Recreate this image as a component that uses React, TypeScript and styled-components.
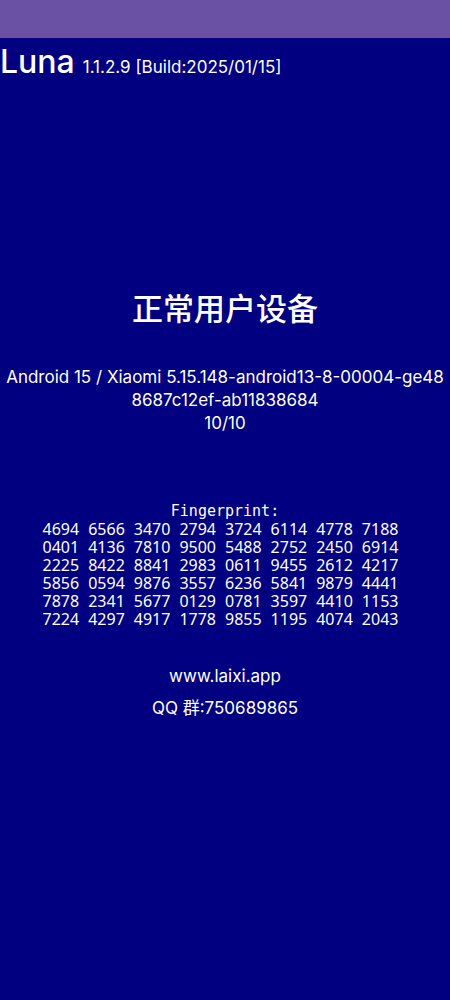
import React from "react";
import styled, { createGlobalStyle } from "styled-components";

const Global = createGlobalStyle`
  * { box-sizing: border-box; }
  body {
    margin: 0;
    background: #000080;
    color: #fff;
    font-family: Inter, "Noto Sans CJK SC", sans-serif;
    font-size: 17px;
  }
`;

const Screen = styled.div`
  min-height: 100vh;
  display: flex;
  flex-direction: column;
`;

const StatusBar = styled.div`
  height: 38px;
  background: #6a51a3;
`;

const Header = styled.header`
  display: flex;
  align-items: baseline;
  gap: 8px;
  line-height: 48px;
`;

const AppName = styled.h1`
  margin: 0;
  font-size: 32px;
  font-weight: 500;
`;

const Version = styled.span`
  font-size: 17px;
`;

const Main = styled.main`
  display: flex;
  flex-direction: column;
  align-items: center;
  padding-top: 194px;
  text-align: center;
`;

const Verdict = styled.h2`
  margin: 0;
  font-size: 31px;
  line-height: 48px;
  font-weight: 500;
`;

const System = styled.p`
  margin: 33px 0 0;
  line-height: 23px;
`;

const Fingerprint = styled.section`
  margin-top: 67px;
  line-height: 18px;
`;

const Label = styled.h3`
  margin: 0;
  font-family: "DejaVu Sans Mono", monospace;
  font-size: 15px;
  font-weight: 400;
`;

const Digits = styled.table`
  border-collapse: collapse;
  font-family: "Noto Sans", sans-serif;
  font-size: 16px;

  td {
    padding: 0 9px 0 0;
  }
`;

const Footer = styled.footer`
  margin-top: 32px;
  display: flex;
  flex-direction: column;
  align-items: center;
  line-height: 32px;
`;

const SiteLink = styled.a`
  color: inherit;
  text-decoration: none;
`;

const rows = [
  "4694 6566 3470 2794 3724 6114 4778 7188",
  "0401 4136 7810 9500 5488 2752 2450 6914",
  "2225 8422 8841 2983 0611 9455 2612 4217",
  "5856 0594 9876 3557 6236 5841 9879 4441",
  "7878 2341 5677 0129 0781 3597 4410 1153",
  "7224 4297 4917 1778 9855 1195 4074 2043",
].map((row) => row.split(" "));

export default function App() {
  return (
    <Screen>
      <Global />
      <StatusBar />
      <Header>
        <AppName>Luna</AppName>
        <Version>1.1.2.9 [Build:2025/01/15]</Version>
      </Header>
      <Main>
        <Verdict lang="zh-CN">正常用户设备</Verdict>
        <System>
          Android 15 / Xiaomi 5.15.148-android13-8-00004-ge48
          <br />
          8687c12ef-ab11838684
          <br />
          10/10
        </System>
        <Fingerprint>
          <Label id="fingerprint">Fingerprint:</Label>
          <Digits aria-labelledby="fingerprint">
            <tbody>
              {rows.map((row) => (
                <tr key={row[0]}>
                  {row.map((group) => (
                    <td key={group}>{group}</td>
                  ))}
                </tr>
              ))}
            </tbody>
          </Digits>
        </Fingerprint>
        <Footer>
          <SiteLink href="https://www.laixi.app">www.laixi.app</SiteLink>
          <span lang="zh-CN">QQ 群:750689865</span>
        </Footer>
      </Main>
    </Screen>
  );
}
